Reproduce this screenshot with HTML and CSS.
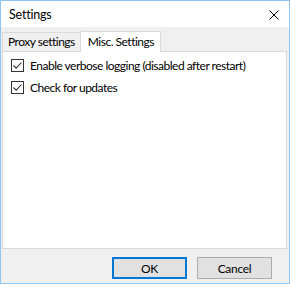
FILE: index.html
```html
<!DOCTYPE html>
<html>
<head>
<meta charset="utf-8">
<link rel="stylesheet" href="styles.css">
</head>
<body>
<div class="window">
  <div class="titlebar">
    <span class="title">Settings</span>
    <svg class="close" width="10" height="10" viewBox="0 0 10 10"><path d="M0.5 0.5 L9.5 9.5 M9.5 0.5 L0.5 9.5" stroke="#000" stroke-width="1" fill="none"/></svg>
  </div>
  <div class="client">
    <div class="tabs">
      <div class="tab">Proxy settings</div>
      <div class="tab active">Misc. Settings</div>
    </div>
    <div class="panel">
      <label class="check"><span class="box"><svg width="11" height="11" viewBox="0 0 11 11"><path d="M1.5 5.5 L4.2 8.2 L9.5 2.5" stroke="#333" stroke-width="1.1" fill="none"/></svg></span>Enable verbose logging (disabled after restart)</label>
      <label class="check"><span class="box"><svg width="11" height="11" viewBox="0 0 11 11"><path d="M1.5 5.5 L4.2 8.2 L9.5 2.5" stroke="#333" stroke-width="1.1" fill="none"/></svg></span>Check for updates</label>
    </div>
    <div class="buttons">
      <button class="btn default">OK</button>
      <button class="btn">Cancel</button>
    </div>
  </div>
</div>
</body>
</html>
```
FILE: styles.css
```css
html, body {
  margin: 0;
  padding: 0;
  background: #fff;
}
.window {
  width: 290px;
  height: 284px;
  box-sizing: border-box;
  border: 1px solid #8fc6f0;
  display: flex;
  flex-direction: column;
  font-family: Lato, "Noto Sans", sans-serif;
  font-size: 12px;
  color: #000;
  letter-spacing: -0.5px;
}
.titlebar {
  height: 26px;
  background: #fff;
  display: flex;
  align-items: center;
  justify-content: space-between;
  padding: 0 10px 0 8px;
  flex: none;
}
.title {
  font-size: 12.5px;
  letter-spacing: -0.2px;
}
.close {
  margin-top: 2px;
}
.client {
  flex: 1;
  background: #f0f0f0;
  display: flex;
  flex-direction: column;
}
.tabs {
  display: flex;
  align-items: flex-end;
  padding: 4px 0 0 1px;
  height: 20px;
  position: relative;
  z-index: 1;
}
.tab {
  box-sizing: border-box;
  height: 19px;
  border: 1px solid #d9d9d9;
  border-bottom: none;
  background: #f0f0f0;
  padding: 0 5px;
  line-height: 17px;
}
.tab.active {
  height: 21px;
  background: #fff;
  border-left: none;
  padding: 0 6px 0 7px;
  line-height: 20px;
  margin-bottom: -1px;
}
.panel {
  box-sizing: border-box;
  margin: 0 2px 0 1px;
  height: 198px;
  background: #fff;
  border: 1px solid #d9d9d9;
  display: flex;
  flex-direction: column;
  padding: 7px 0 0 8px;
  gap: 9px;
}
.check {
  display: flex;
  align-items: center;
  height: 13px;
}
.box {
  box-sizing: border-box;
  width: 13px;
  height: 13px;
  border: 1px solid #333;
  background: #fff;
  margin-right: 6px;
  display: flex;
  align-items: center;
  justify-content: center;
}
.box svg {
  display: block;
}
.buttons {
  display: flex;
  justify-content: flex-end;
  gap: 10px;
  padding: 8px 17px 0 0;
}
.btn {
  box-sizing: border-box;
  width: 75px;
  height: 22px;
  background: #e1e1e1;
  border: 1px solid #adadad;
  font-family: Lato, "Noto Sans", sans-serif;
  font-size: 12px;
  color: #000;
  padding: 0;
  letter-spacing: -0.3px;
}
.btn.default {
  border: 2px solid #0078d7;
}
```
